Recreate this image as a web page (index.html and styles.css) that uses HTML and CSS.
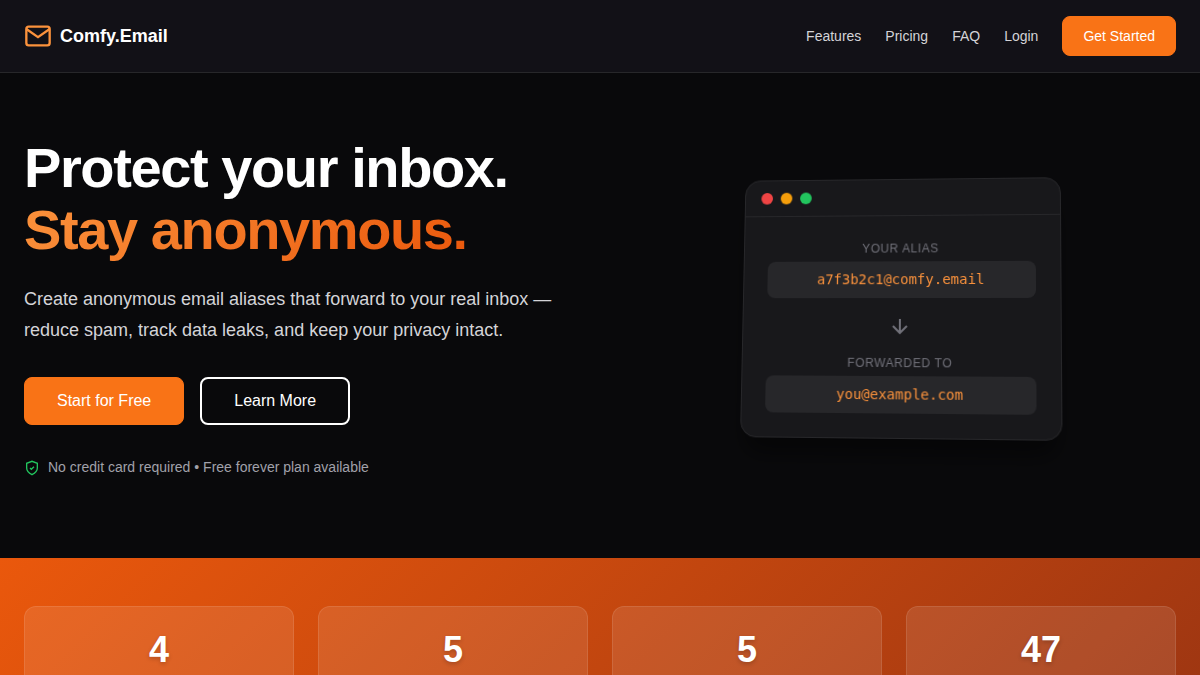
FILE: index.html
```html
<!DOCTYPE html>
<html lang="en">
<head>
  <meta charset="UTF-8" />
  <meta name="viewport" content="width=device-width, initial-scale=1" />
  <title>Comfy.Email</title>
  <link rel="stylesheet" href="styles.css">
</head>
<body>

  <header class="header">
    <a href="#" class="logo">
      <svg width="28" height="28" viewBox="0 0 24 24" fill="none" stroke="currentColor" stroke-width="2" aria-hidden="true">
        <rect x="2" y="4" width="20" height="16" rx="2"/>
        <path d="M22 6l-10 7L2 6"/>
      </svg>
      Comfy.Email
    </a>
    <nav class="nav">
      <a href="#features">Features</a>
      <a href="#pricing">Pricing</a>
      <a href="#faq">FAQ</a>
      <a href="#login">Login</a>
      <a href="#register" class="btn btn-primary btn-small">Get Started</a>
    </nav>
  </header>

  <main>
    <section class="hero">
      <div class="hero-text">
        <h1>Protect your inbox.<br><span class="gradient-text">Stay anonymous.</span></h1>
        <p class="lead">Create anonymous email aliases that forward to your real inbox — reduce spam, track data leaks, and keep your privacy intact.</p>
        <div class="hero-buttons">
          <a href="#register" class="btn btn-primary">Start for Free</a>
          <a href="#features" class="btn btn-outline">Learn More</a>
        </div>
        <p class="note">
          <svg width="16" height="16" viewBox="0 0 24 24" fill="none" stroke="currentColor" stroke-width="2" aria-hidden="true">
            <path d="M12 22s8-4 8-10V5l-8-3-8 3v7c0 6 8 10 8 10z"/>
            <path d="M9 12l2 2 4-4"/>
          </svg>
          No credit card required • Free forever plan available
        </p>
      </div>

      <div class="hero-visual">
        <div class="mockup">
          <div class="mockup-bar">
            <span class="dot red"></span>
            <span class="dot yellow"></span>
            <span class="dot green"></span>
          </div>
          <div class="mockup-body">
            <div class="mockup-label">Your Alias</div>
            <div class="mockup-email">a7f3b2c1@comfy.email</div>
            <div class="mockup-arrow">
              <svg width="24" height="24" viewBox="0 0 24 24" fill="none" stroke="currentColor" stroke-width="2" aria-hidden="true">
                <path d="M12 5v14M19 12l-7 7-7-7"/>
              </svg>
            </div>
            <div class="mockup-label">Forwarded To</div>
            <div class="mockup-email">you@example.com</div>
          </div>
        </div>
      </div>
    </section>

    <section class="stats">
      <div class="stat-card"><div class="stat-number">4</div></div>
      <div class="stat-card"><div class="stat-number">5</div></div>
      <div class="stat-card"><div class="stat-number">5</div></div>
      <div class="stat-card"><div class="stat-number">47</div></div>
    </section>
  </main>

</body>
</html>
```

FILE: styles.css
```css
:root{
  --primary:#f97316;
  --primary-light:#fb923c;
  --primary-dark:#ea580c;
  --bg:#09090b;
  --surface:#18181b;
  --border:#27272a;
  --muted:#a1a1aa;
}
*{box-sizing:border-box;margin:0;padding:0}
body{
  background:var(--bg);
  color:#fff;
  font-family:"Liberation Sans",Arial,sans-serif;
  font-size:16px;
}
a{color:inherit;text-decoration:none}
svg{display:block;flex-shrink:0}

/* ---------- header ---------- */
.header{
  display:flex;
  align-items:center;
  justify-content:space-between;
  padding:16px 24px;
  background:#121117;
  border-bottom:1px solid var(--border);
}
.logo{
  display:flex;
  align-items:center;
  gap:8px;
  font-size:18px;
  font-weight:700;
}
.logo svg{color:var(--primary-light)}
.nav{
  display:flex;
  align-items:center;
  gap:24px;
  font-size:14px;
  color:#d4d4d8;
}
.nav a:hover{color:#fff}

/* ---------- buttons ---------- */
.btn{
  display:inline-flex;
  align-items:center;
  justify-content:center;
  height:48px;
  padding:0 32px;
  border-radius:8px;
  color:#fff;
}
.btn-primary{background:var(--primary);border:1px solid var(--primary)}
.btn-primary:hover{background:var(--primary-dark)}
.btn-outline{border:2px solid #fff}
.btn-small{height:40px;padding:0 20px}

/* ---------- hero ---------- */
.hero{
  display:grid;
  grid-template-columns:1fr 1fr;
  gap:48px;
  align-items:center;
  padding:64px 24px 80px;
}
h1{
  font-size:56px;
  line-height:1.1;
  letter-spacing:-0.025em;
  margin-bottom:24px;
}
.gradient-text{
  background:linear-gradient(135deg,var(--primary-light),var(--primary-dark));
  -webkit-background-clip:text;
  background-clip:text;
  color:transparent;
}
.lead{
  font-size:18px;
  line-height:1.7;
  color:#d4d4d8;
  margin-bottom:32px;
}
.hero-buttons{display:flex;gap:16px;margin-bottom:32px}
.note{
  display:flex;
  align-items:center;
  gap:8px;
  font-size:14px;
  line-height:21px;
  color:var(--muted);
}
.note svg{color:#22c55e}

/* ---------- tilted window ---------- */
.hero-visual{
  display:flex;
  justify-content:center;
  perspective:1000px;
}
.mockup{
  width:320px;
  background:var(--surface);
  border:1px solid var(--border);
  border-radius:16px;
  box-shadow:0 20px 25px -5px rgba(0,0,0,.5);
  transform:rotateY(-5deg) rotateX(5deg);
  overflow:hidden;
}
.mockup-bar{
  display:flex;
  gap:8px;
  padding:12px 16px;
  border-bottom:1px solid var(--border);
}
.dot{width:12px;height:12px;border-radius:50%}
.red{background:#ef4444}
.yellow{background:#f59e0b}
.green{background:#22c55e}
.mockup-body{padding:24px;text-align:center}
.mockup-label{
  font-size:12px;
  line-height:18px;
  letter-spacing:0.05em;
  text-transform:uppercase;
  color:#71717a;
  margin-bottom:4px;
}
.mockup-email{
  padding:10px 16px;
  background:var(--border);
  border-radius:8px;
  font-family:"DejaVu Sans Mono",monospace;
  font-size:14px;
  line-height:17px;
  color:var(--primary-light);
}
.mockup-arrow{
  display:flex;
  justify-content:center;
  padding:16px 0;
  color:#71717a;
}

/* ---------- stats ---------- */
.stats{
  display:grid;
  grid-template-columns:repeat(4,1fr);
  gap:24px;
  padding:48px 24px;
  background:linear-gradient(135deg,#ea580c,#9a3412);
}
.stat-card{
  min-height:120px;
  padding:24px;
  background:rgba(255,255,255,.1);
  border:1px solid rgba(255,255,255,.1);
  border-radius:12px;
  text-align:center;
}
.stat-number{
  font-size:36px;
  font-weight:700;
  line-height:38px;
  text-shadow:0 2px 4px rgba(0,0,0,.2);
}
```
